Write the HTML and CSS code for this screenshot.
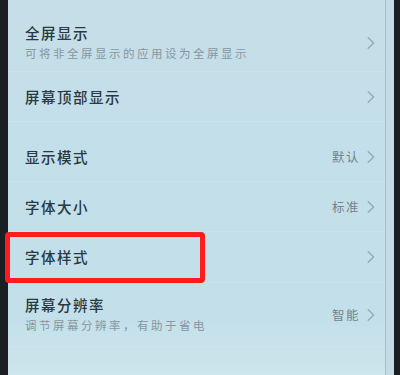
FILE: index.html
```html
<!DOCTYPE html>
<html lang="zh-CN">
<head>
<meta charset="utf-8">
<title>显示设置</title>
<link rel="stylesheet" href="styles.css">
</head>
<body>
<div class="device">
  <div class="screen">
    <div class="list">
      <div class="row tall first">
        <div class="text">
          <div class="title">全屏显示</div>
          <div class="sub">可将非全屏显示的应用设为全屏显示</div>
        </div>
        <svg class="chev" viewBox="0 0 8 12" width="8" height="12"><path d="M1.2 0.8 L6.6 6 L1.2 11.2" /></svg>
      </div>
      <div class="row">
        <div class="text"><div class="title">屏幕顶部显示</div></div>
        <svg class="chev" viewBox="0 0 8 12" width="8" height="12"><path d="M1.2 0.8 L6.6 6 L1.2 11.2" /></svg>
      </div>
      <div class="group-gap"></div>
      <div class="row">
        <div class="text"><div class="title">显示模式</div></div>
        <span class="value">默认</span>
        <svg class="chev" viewBox="0 0 8 12" width="8" height="12"><path d="M1.2 0.8 L6.6 6 L1.2 11.2" /></svg>
      </div>
      <div class="row">
        <div class="text"><div class="title">字体大小</div></div>
        <span class="value">标准</span>
        <svg class="chev" viewBox="0 0 8 12" width="8" height="12"><path d="M1.2 0.8 L6.6 6 L1.2 11.2" /></svg>
      </div>
      <div class="row marked">
        <div class="text"><div class="title">字体样式</div></div>
        <svg class="chev" viewBox="0 0 8 12" width="8" height="12"><path d="M1.2 0.8 L6.6 6 L1.2 11.2" /></svg>
        <div class="highlight"></div>
      </div>
      <div class="row tall last">
        <div class="text">
          <div class="title">屏幕分辨率</div>
          <div class="sub">调节屏幕分辨率，有助于省电</div>
        </div>
        <span class="value">智能</span>
        <svg class="chev" viewBox="0 0 8 12" width="8" height="12"><path d="M1.2 0.8 L6.6 6 L1.2 11.2" /></svg>
      </div>
    </div>
    <div class="edge"></div>
  </div>
</div>
</body>
</html>
```

FILE: styles.css
```css
html, body {
  margin: 0;
  padding: 0;
  width: 400px;
  height: 375px;
  overflow: hidden;
  background: #1b1f23;
  font-family: "Noto Sans CJK SC", "Noto Sans", sans-serif;
}

.device {
  display: flex;
  height: 375px;
  padding-left: 8px;
  padding-right: 6px;
  box-sizing: border-box;
}

.screen {
  flex: 1;
  display: flex;
  background: linear-gradient(180deg, #c6dee7 0%, #c2dfea 45%, #c3e0ea 85%, #cde5ec 100%);
}

.list {
  flex: 1;
  display: flex;
  flex-direction: column;
  padding-top: 14px;
  border-right: 1px solid #a9c0c9;
}

.edge {
  width: 8px;
  background: #c2dbe4;
}

.row {
  position: relative;
  display: flex;
  align-items: center;
  height: 50px;
  padding-left: 17px;
  padding-right: 10px;
  border-bottom: 1px solid rgba(225, 242, 248, 0.22);
  box-sizing: border-box;
}

.row.tall.first {
  height: 58px;
}

.row.tall.last {
  height: 64px;
}

.row.marked {
  height: 51px;
}

.group-gap {
  height: 10px;
}

.text {
  flex: 1;
  display: flex;
  flex-direction: column;
  gap: 3px;
}

.title {
  font-size: 14.5px;
  font-weight: 500;
  line-height: 18px;
  letter-spacing: 1.5px;
  color: #2a3840;
}

.sub {
  font-size: 11.5px;
  line-height: 16px;
  letter-spacing: 2.5px;
  color: #8796a0;
}

.value {
  font-size: 12.5px;
  letter-spacing: 1.5px;
  color: #72838c;
  margin-right: 7px;
}

.chev {
  flex: none;
  width: 8px;
  height: 12px;
}

.chev path {
  fill: none;
  stroke: #98a8b0;
  stroke-width: 1.3;
  stroke-linecap: round;
  stroke-linejoin: round;
}

.highlight {
  position: absolute;
  left: -3px;
  top: 0;
  width: 200px;
  height: 51px;
  border: 5px solid #ff1c1c;
  border-radius: 4px;
  box-sizing: border-box;
}
```
